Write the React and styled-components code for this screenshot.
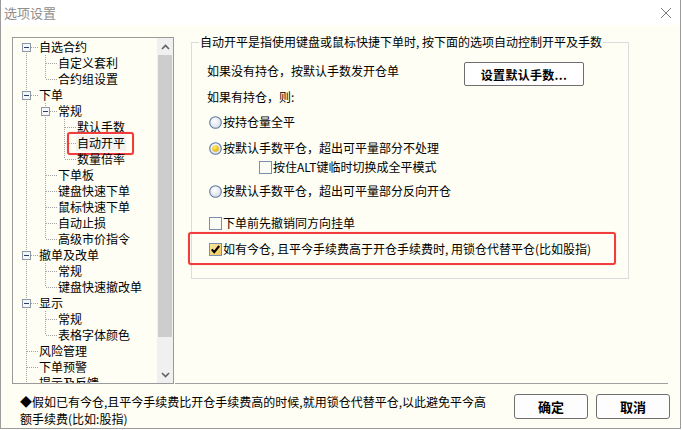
import React from 'react';
import styled, { createGlobalStyle } from 'styled-components';

const GlobalStyle = createGlobalStyle`
  html, body {
    margin: 0;
    padding: 0;
    background: #ffffff;
  }
  body {
    font-family: "Noto Sans CJK SC", "Liberation Sans", sans-serif;
    font-size: 12px;
    color: #000;
  }
`;

const CREAM = '#fefef4';

const Window = styled.div`
  width: 681px;
  height: 429px;
  box-sizing: border-box;
  border: 1px solid #9c9c9c;
  border-top: none;
  display: flex;
  flex-direction: column;
  background: ${CREAM};
`;

const TitleBar = styled.div`
  height: 25px;
  flex: none;
  background: #ffffff;
  display: flex;
  align-items: center;
  padding: 0 8px 0 3px;
  font-size: 13px;
  color: #8e8e8e;
`;

const TitleText = styled.span`
  flex: 1;
  line-height: 25px;
`;

const CloseBtn = styled.span`
  display: flex;
  width: 12px;
  height: 12px;
  margin-top: 1px;
`;

const Body = styled.div`
  flex: 1;
  display: flex;
  flex-direction: column;
  padding: 12px 12px 0 11px;
`;

const Main = styled.div`
  display: flex;
  align-items: stretch;
`;

const TreeBox = styled.div`
  width: 162px;
  height: 347px;
  box-sizing: border-box;
  border: 1px solid #9a9a9a;
  display: flex;
  background: ${CREAM};
  flex: none;
`;

const TreeList = styled.div`
  flex: 1;
  overflow: hidden;
  padding: 1px 0 0 6px;
`;

const TreeRow = styled.div`
  display: flex;
  height: 16px;
  line-height: 16px;
  white-space: nowrap;
`;

const Cell = styled.svg`
  width: 19px;
  height: 16px;
  flex: none;
  display: block;
`;

const NodeLabel = styled.span`
  position: relative;
  padding: 0 1px;
  background: ${p => (p.$selected ? '#f2f2f0' : 'transparent')};
`;

const Annotation = styled.span`
  position: absolute;
  top: ${p => p.$top}px;
  bottom: ${p => p.$bottom}px;
  left: ${p => p.$left}px;
  right: ${p => p.$right}px;
  border: 2px solid #f03c3c;
  border-radius: 3px;
  box-shadow: 0 0 1px rgba(240, 60, 60, 0.6);
  pointer-events: none;
`;

const ScrollBar = styled.div`
  width: 16px;
  flex: none;
  display: flex;
  flex-direction: column;
  background: #f0f0f0;
`;

const ScrollArrow = styled.div`
  height: 17px;
  display: flex;
  align-items: center;
  justify-content: center;
`;

const ScrollThumb = styled.div`
  height: 282px;
  margin: 0 1px;
  background: #cdcdcd;
`;

const ScrollTrack = styled.div`
  flex: 1;
`;

const RightPane = styled.div`
  flex: 1;
  border-bottom: 1px solid #a0a0a0;
  padding-left: 16px;
  margin-left: 1px;
`;

const GroupBox = styled.fieldset`
  width: 438px;
  box-sizing: border-box;
  margin: -3px 0 0 0;
  padding: 0 0 21px 0;
  border: 1px solid #d9dde0;
  display: flex;
  flex-direction: column;
`;

const Legend = styled.legend`
  margin-left: 7px;
  padding: 0 1px;
  line-height: 16px;
  font-size: 12px;
`;

const Row = styled.div`
  display: flex;
  align-items: ${p => (p.$tall ? 'flex-start' : 'center')};
  height: ${p => (p.$tall ? 24 : 16)}px;
  line-height: 16px;
  margin-top: ${p => p.$gap}px;
  padding-left: ${p => p.$indent}px;
  position: relative;
  white-space: nowrap;
`;

const PlainText = styled.span`
  margin-top: ${p => p.$shift || 0}px;
`;

const Control = styled.svg`
  width: 13px;
  height: 13px;
  flex: none;
  display: block;
  margin-right: 1px;
`;

const SetButton = styled.button`
  margin-left: auto;
  margin-right: 44px;
  width: 120px;
  height: 24px;
  box-sizing: border-box;
  border: 1px solid #6e6e6e;
  border-radius: 2px;
  background: #ffffff;
  font-family: "Noto Sans CJK SC", "Liberation Sans", sans-serif;
  font-size: 12px;
  font-weight: 700;
  padding: 0;
  letter-spacing: 0.3px;
`;

const Footer = styled.div`
  display: flex;
  align-items: flex-start;
  padding-top: 9px;
`;

const Note = styled.div`
  margin-left: 8px;
  line-height: 17px;
  font-size: 12px;
  white-space: nowrap;
`;

const ButtonBar = styled.div`
  margin-left: auto;
  margin-right: -2px;
  display: flex;
  gap: 8px;
  padding-top: 1px;
`;

const DialogButton = styled.button`
  width: 74px;
  height: 25px;
  box-sizing: border-box;
  border: 1px solid #6e6e6e;
  border-radius: 3px;
  background: #fdfdfd;
  font-family: "Noto Sans CJK SC", "Liberation Sans", sans-serif;
  font-size: 13px;
  font-weight: 700;
  padding: 0;
`;

const tree = [
  { label: '自选合约', children: [{ label: '自定义套利' }, { label: '合约组设置' }] },
  {
    label: '下单',
    children: [
      {
        label: '常规',
        children: [{ label: '默认手数' }, { label: '自动开平', selected: true }, { label: '数量倍率' }],
      },
      { label: '下单板' },
      { label: '键盘快速下单' },
      { label: '鼠标快速下单' },
      { label: '自动止损' },
      { label: '高级市价指令' },
    ],
  },
  { label: '撤单及改单', children: [{ label: '常规' }, { label: '键盘快速撤改单' }] },
  { label: '显示', children: [{ label: '常规' }, { label: '表格字体颜色' }] },
  { label: '风险管理' },
  { label: '下单预警' },
  { label: '提示及反馈' },
  { label: '其他设置' },
];

function flatten(nodes, level, guides, out) {
  nodes.forEach((node, i) => {
    const hasNext = i < nodes.length - 1;
    out.push({
      ...node,
      level,
      guides,
      hasNext,
      isTop: level === 0 && i === 0,
      hasChildren: !!node.children,
    });
    if (node.children) flatten(node.children, level + 1, guides.concat(hasNext), out);
  });
  return out;
}

const rows = flatten(tree, 0, [], []);
const DOT = '#a3a3a3';

function GuideCell({ line }) {
  return (
    <Cell viewBox="0 0 19 16">
      {line && <line x1="7.5" y1="0" x2="7.5" y2="16" stroke={DOT} strokeDasharray="1 1" />}
    </Cell>
  );
}

function ConnectorCell({ isTop, hasNext, hasChildren }) {
  return (
    <Cell viewBox="0 0 19 16">
      <line x1="7.5" y1={isTop ? 8 : 0} x2="7.5" y2={hasNext ? 16 : 8} stroke={DOT} strokeDasharray="1 1" />
      <line x1="8" y1="8.5" x2="19" y2="8.5" stroke={DOT} strokeDasharray="1 1" />
      {hasChildren && (
        <g>
          <rect x="3.5" y="4.5" width="8" height="8" fill="#f4f6f8" stroke="#8c98a8" />
          <line x1="5" y1="8.5" x2="10" y2="8.5" stroke="#29416a" />
        </g>
      )}
    </Cell>
  );
}

function Chevron({ down }) {
  return (
    <svg width="9" height="6" viewBox="0 0 9 6">
      <path
        d={down ? 'M1 1 L4.5 4.5 L8 1' : 'M1 5 L4.5 1.5 L8 5'}
        fill="none"
        stroke="#606060"
        strokeWidth="1.6"
      />
    </svg>
  );
}

function Radio({ checked }) {
  return (
    <Control viewBox="0 0 13 13">
      <defs>
        <radialGradient id={checked ? 'rg-on' : 'rg-off'} cx="0.4" cy="0.35" r="0.7">
          <stop offset="0" stopColor="#ffffff" />
          <stop offset="1" stopColor="#d7dde6" />
        </radialGradient>
        <radialGradient id="dot" cx="0.4" cy="0.35" r="0.7">
          <stop offset="0" stopColor="#fff45a" />
          <stop offset="1" stopColor="#e2a800" />
        </radialGradient>
      </defs>
      <circle cx="6.5" cy="6.5" r="5.8" fill={`url(#${checked ? 'rg-on' : 'rg-off'})`} stroke="#5f7aa3" strokeWidth="1.1" />
      {checked && <circle cx="6.5" cy="6.5" r="3.3" fill="url(#dot)" />}
    </Control>
  );
}

function CheckBox({ checked }) {
  return (
    <Control viewBox="0 0 13 13">
      <defs>
        <linearGradient id="cb-on" x1="0" y1="0" x2="1" y2="1">
          <stop offset="0" stopColor="#fbe7a4" />
          <stop offset="1" stopColor="#f2c75a" />
        </linearGradient>
      </defs>
      <rect x="0.5" y="0.5" width="12" height="12" fill={checked ? 'url(#cb-on)' : '#fbfbf6'} stroke="#7a8fb0" />
      {checked && <path d="M2.8 6.4 L5.2 9.2 L10.2 3" fill="none" stroke="#000" strokeWidth="2.1" />}
    </Control>
  );
}

export default function App() {
  return (
    <>
      <GlobalStyle />
      <Window>
        <TitleBar>
          <TitleText>选项设置</TitleText>
          <CloseBtn>
            <svg width="12" height="12" viewBox="0 0 12 12">
              <path d="M1 1 L11 11 M11 1 L1 11" stroke="#7c7c7c" strokeWidth="1" />
            </svg>
          </CloseBtn>
        </TitleBar>
        <Body>
          <Main>
            <TreeBox>
              <TreeList>
                {rows.map((r, i) => (
                  <TreeRow key={i}>
                    {r.guides.map((g, j) => (
                      <GuideCell key={j} line={g} />
                    ))}
                    <ConnectorCell isTop={r.isTop} hasNext={r.hasNext} hasChildren={r.hasChildren} />
                    <NodeLabel $selected={r.selected}>
                      {r.label}
                      {r.selected && <Annotation $top={-3} $bottom={-4} $left={-9} $right={-8} />}
                    </NodeLabel>
                  </TreeRow>
                ))}
              </TreeList>
              <ScrollBar>
                <ScrollArrow>
                  <Chevron />
                </ScrollArrow>
                <ScrollThumb />
                <ScrollTrack />
                <ScrollArrow>
                  <Chevron down />
                </ScrollArrow>
              </ScrollBar>
            </TreeBox>
            <RightPane>
              <GroupBox>
                <Legend>自动开平是指使用键盘或鼠标快捷下单时, 按下面的选项自动控制开平及手数</Legend>
                <Row $tall $gap={12} $indent={15}>
                  <PlainText $shift={1}>如果没有持仓，按默认手数发开仓单</PlainText>
                  <SetButton>设置默认手数...</SetButton>
                </Row>
                <Row $gap={3} $indent={15}>
                  <PlainText>如果有持仓，则:</PlainText>
                </Row>
                <Row $gap={9} $indent={17}>
                  <Radio />
                  <PlainText>按持仓量全平</PlainText>
                </Row>
                <Row $gap={10} $indent={17}>
                  <Radio checked />
                  <PlainText>按默认手数平仓，超出可平量部分不处理</PlainText>
                </Row>
                <Row $gap={3} $indent={67}>
                  <CheckBox />
                  <PlainText>按住ALT键临时切换成全平模式</PlainText>
                </Row>
                <Row $gap={8} $indent={17}>
                  <Radio />
                  <PlainText>按默认手数平仓，超出可平量部分反向开仓</PlainText>
                </Row>
                <Row $gap={16} $indent={17}>
                  <CheckBox />
                  <PlainText>下单前先撤销同方向挂单</PlainText>
                </Row>
                <Row $gap={10} $indent={17}>
                  <CheckBox checked />
                  <PlainText>如有今仓, 且平今手续费高于开仓手续费时, 用锁仓代替平仓(比如股指)</PlainText>
                  <Annotation $top={-9} $bottom={-8} $left={-4} $right={12} />
                </Row>
              </GroupBox>
            </RightPane>
          </Main>
          <Footer>
            <Note>
              ◆假如已有今仓,且平今手续费比开仓手续费高的时候,就用锁仓代替平仓,以此避免平今高
              <br />
              额手续费(比如:股指)
            </Note>
            <ButtonBar>
              <DialogButton>确定</DialogButton>
              <DialogButton>取消</DialogButton>
            </ButtonBar>
          </Footer>
        </Body>
      </Window>
    </>
  );
}
